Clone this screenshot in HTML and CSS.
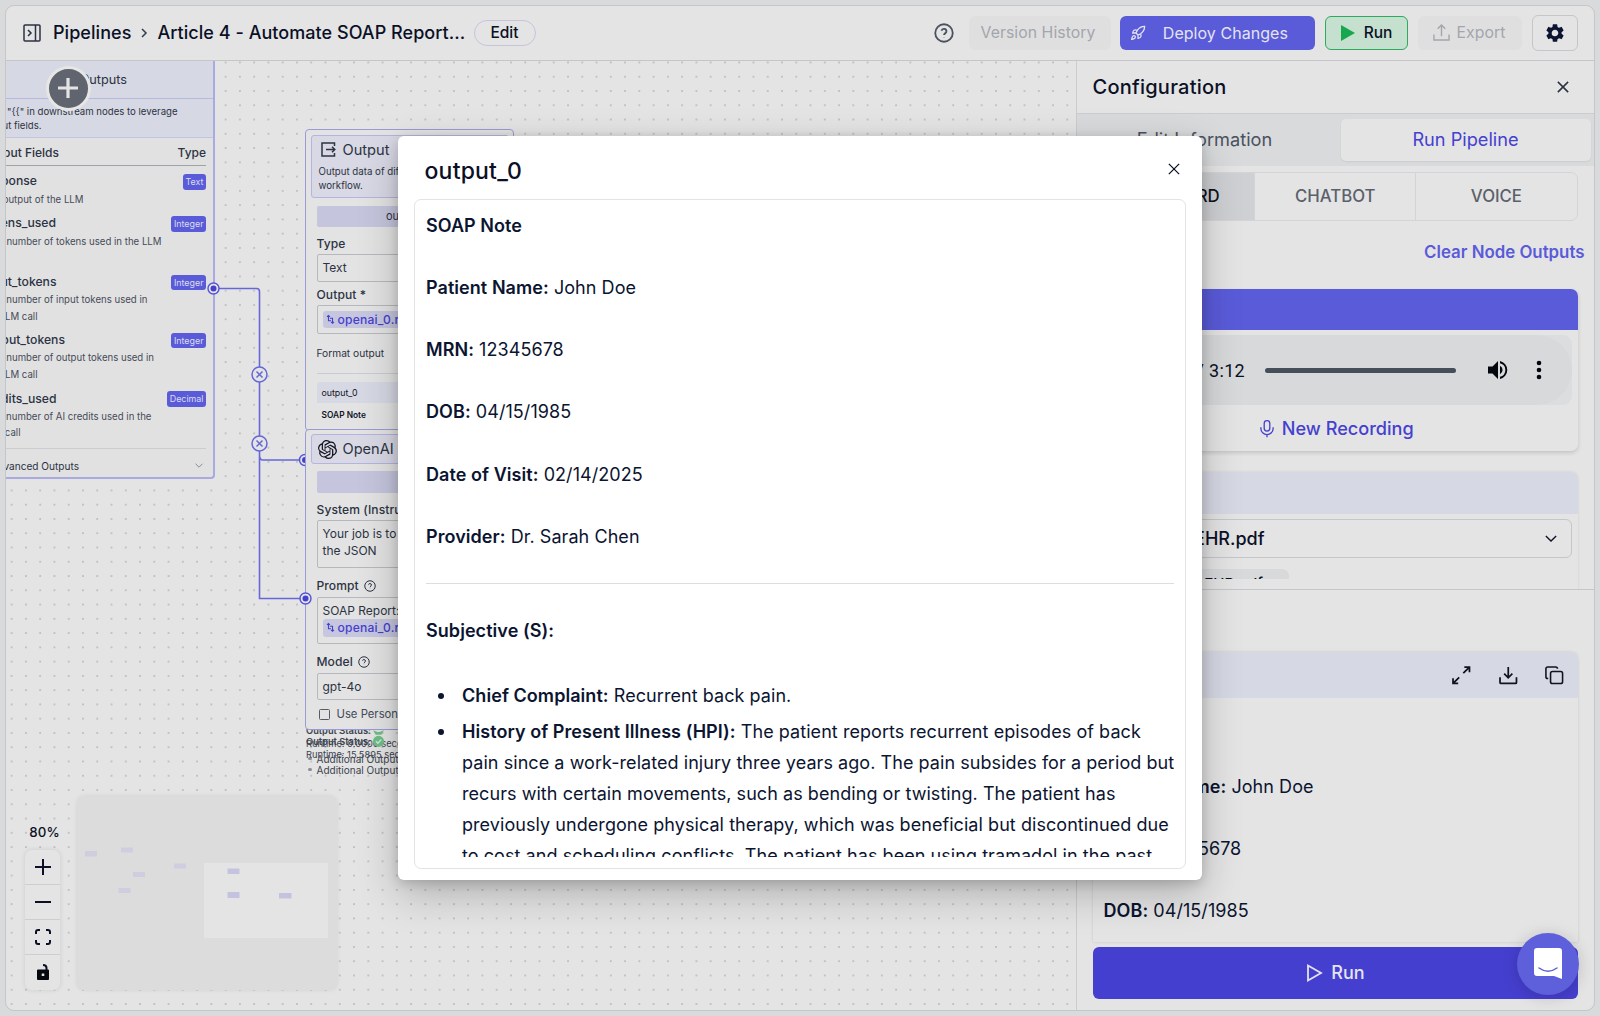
FILE: index.html
```html
<!DOCTYPE html>
<html lang="en">
<head>
<meta charset="utf-8">
<title>Pipelines</title>
<link rel="stylesheet" href="styles.css">
</head>
<body>
<svg class="defs" width="0" height="0">
  <symbol id="help" viewBox="0 0 24 24"><circle cx="12" cy="12" r="10.5"/><path d="M9 9.3a3 3 0 0 1 5.9.8c0 2-2.9 2.4-2.9 4.4M12 17.6v.3"/></symbol>
  <symbol id="close" viewBox="0 0 14 14"><path d="M1 1l12 12M13 1L1 13"/></symbol>
  <symbol id="chev" viewBox="0 0 14 8"><path d="M1 1l6 6 6-6"/></symbol>
  <symbol id="var" viewBox="0 0 12 12"><path d="M2.500 -1v9H7M0 1.500l2.500-2.500L5 1.500M5 4h4.500v8M7 10l2.500 2.500L12 10"/></symbol>
</svg>
<div class="app">
  <header class="topbar">
    <svg class="i-panel" viewBox="0 0 18 18"><rect x="1" y="1" width="16" height="16" rx="1"/><path d="M12.500 1v16M5 6l3 3-3 3"/></svg>
    <span class="crumb">Pipelines</span>
    <svg class="i-sep" viewBox="0 0 6 10"><path d="M1 1l4 4-4 4"/></svg>
    <span class="crumb title">Article 4 - Automate SOAP Report...</span>
    <span class="edit">Edit</span>
    <span class="spacer"></span>
    <svg class="i-help"><use href="#help"/></svg>
    <span class="btn ghost version">Version History</span>
    <span class="btn deploy"><svg viewBox="0 0 24 24"><path d="M4.500 16.500c-1.500 1.260-2 5-2 5s3.740-.5 5-2c.71-.84.7-2.130-.09-2.910a2.180 2.180 0 0 0-2.910-.09zM12 15l-3-3a22 22 0 0 1 2-3.950A12.880 12.880 0 0 1 22 2c0 2.720-.78 7.500-6 11a22.350 22.350 0 0 1-4 2zM9 12H4s.55-3.030 2-4c1.620-1.080 5 0 5 0M12 15v5s3.030-.55 4-2c1.080-1.620 0-5 0-5"/></svg>Deploy Changes</span>
    <span class="btn run"><svg viewBox="0 0 14 16"><path d="M0 0l14 8-14 8z"/></svg>Run</span>
    <span class="btn ghost export"><svg viewBox="0 0 18 18"><path d="M1 11v6h16v-6M9 13V1M5 5l4-4 4 4"/></svg>Export</span>
    <span class="btn gear"><svg viewBox="0 0 24 24"><path d="M19.140 12.940c.04-.3.06-.61.06-.94 0-.32-.02-.64-.07-.94l2.030-1.580a.49.49 0 0 0 .12-.61l-1.920-3.320a.488.488 0 0 0-.59-.22l-2.390.96c-.5-.38-1.030-.7-1.620-.94l-.36-2.540a.484.484 0 0 0-.48-.41h-3.840c-.24 0-.43.17-.47.41l-.36 2.540c-.59.24-1.130.57-1.620.94l-2.390-.96c-.22-.08-.47 0-.59.22L2.740 8.870c-.12.21-.08.47.12.61l2.030 1.580c-.05.3-.09.63-.09.94s.02.64.07.94l-2.030 1.580a.49.49 0 0 0-.12.61l1.920 3.320c.12.22.37.29.59.22l2.390-.96c.5.38 1.030.7 1.620.94l.36 2.540c.05.24.24.41.48.41h3.840c.24 0 .44-.17.47-.41l.36-2.540c.59-.24 1.130-.56 1.620-.94l2.390.96c.22.08.47 0 .59-.22l1.920-3.320c.12-.22.07-.47-.12-.61l-2.010-1.580zM12 15.600A3.610 3.610 0 0 1 8.400 12c0-1.980 1.620-3.600 3.600-3.600s3.600 1.620 3.600 3.600-1.620 3.600-3.600 3.600z"/></svg></span>
  </header>
  <div class="body">
    <main class="canvas">
      <div class="status first">
        <p class="st">Output Status:</p><p class="rt">Runtime: 0.0000 seconds</p><p class="ao">Additional Outputs</p>
      </div>
      <div class="status second">
        <p class="st">Output Status:</p><p class="rt">Runtime: 15.5895 seconds</p><p class="ao">Additional Outputs</p>
      </div>
      <svg class="wires" width="320" height="600" viewBox="0 60 320 600">
        <g class="line"><path d="M213.500 288.500H256.500Q259.500 288.500 259.500 291.500V598.500H305M259.500 455Q259.500 460 263 460H305"/></g>
        <g class="mid"><circle cx="259.500" cy="374.500" r="7.500"/><circle cx="259.500" cy="443.500" r="7.500"/><path d="M256.500 371.500l6 6m0-6l-6 6M256.500 440.500l6 6m0-6l-6 6"/></g>
        <g class="port"><circle cx="305" cy="460" r="5.500"/><circle class="dot" cx="305" cy="460" r="3"/></g>
      </svg>
      <section class="node outputs">
        <div class="n-head"><span class="t" style="width:127.500px">Outputs</span></div>
        <div class="n-desc"><span class="t" style="width:178px">Type "{{" in downstream nodes to leverage</span><span class="t" style="width:42px">output fields.</span></div>
        <div class="n-cols"><span class="t" style="width:59.500px">Output Fields</span><span>Type</span></div>
        <div class="field one"><div class="row"><b class="t" style="width:37.500px">response</b><i>Text</i></div><span class="t" style="width:84px">The output of the LLM</span></div>
        <div class="field two"><div class="row"><b class="t" style="width:56.500px">tokens_used</b><i>Integer</i></div><span class="t" style="width:162px">The number of tokens used in the LLM</span><span>&nbsp;</span></div>
        <div class="field"><div class="row"><b class="t" style="width:57px">input_tokens</b><i>Integer</i></div><span class="t" style="width:148px">The number of input tokens used in</span><span class="t" style="width:38px">the LLM call</span></div>
        <div class="field"><div class="row"><b class="t" style="width:65.500px">output_tokens</b><i>Integer</i></div><span class="t" style="width:154.500px">The number of output tokens used in</span><span class="t" style="width:38px">the LLM call</span></div>
        <div class="field last"><div class="row"><b class="t" style="width:57px">credits_used</b><i>Decimal</i></div><span class="t" style="width:152px">The number of AI credits used in the</span><span class="t" style="width:21px">LLM call</span></div>
        <div class="n-adv"><span class="t" style="width:79.500px">Advanced Outputs</span><svg><use href="#chev"/></svg></div>
      </section>
      <section class="node out">
        <div class="box-head tall">
          <div class="name"><svg viewBox="0 0 15 15"><path d="M13.500 4V1H1v13h12.500v-3M5 7.500h9M11 4.800l2.800 2.700L11 10.200"/></svg>Output</div>
          <p>Output data of different types from<br>workflow.</p>
        </div>
        <div class="tag">output_0</div>
        <div class="lbl l1">Type</div>
        <div class="inp">Text</div>
        <div class="lbl l2">Output *</div>
        <div class="inp"><span class="pill"><svg><use href="#var"/></svg>openai_0.response</span></div>
        <div class="fmt">Format output</div>
        <div class="prev"><div>output_0</div><b>SOAP Note</b></div>
      </section>
      <section class="node ai">
        <div class="box-head">
          <div class="name"><svg class="knot" viewBox="0 0 24 24"><path d="M22.282 9.821a5.985 5.985 0 0 0-.516-4.910 6.046 6.046 0 0 0-6.510-2.900A6.065 6.065 0 0 0 4.981 4.180a5.985 5.985 0 0 0-3.998 2.900 6.046 6.046 0 0 0 .743 7.097 5.980 5.980 0 0 0 .510 4.911 6.051 6.051 0 0 0 6.515 2.900A5.985 5.985 0 0 0 13.260 24a6.056 6.056 0 0 0 5.772-4.206 5.990 5.990 0 0 0 3.998-2.900 6.056 6.056 0 0 0-.747-7.073zM13.260 22.430a4.476 4.476 0 0 1-2.876-1.040l.141-.081 4.779-2.758a.795.795 0 0 0 .393-.681v-6.737l2.020 1.169a.071.071 0 0 1 .038.052v5.583a4.504 4.504 0 0 1-4.495 4.493zM3.600 18.304a4.471 4.471 0 0 1-.535-3.014l.142.085 4.783 2.759a.771.771 0 0 0 .781 0l5.843-3.369v2.332a.080.080 0 0 1-.033.062L9.740 19.950a4.500 4.500 0 0 1-6.140-1.646zM2.341 7.896a4.485 4.485 0 0 1 2.366-1.973V11.600a.766.766 0 0 0 .388.677l5.815 3.354-2.020 1.169a.076.076 0 0 1-.071 0l-4.830-2.787A4.504 4.504 0 0 1 2.341 7.872zm16.597 3.855l-5.834-3.387L15.119 7.200a.076.076 0 0 1 .071 0l4.830 2.791a4.494 4.494 0 0 1-.676 8.105v-5.678a.790.790 0 0 0-.406-.667zm2.010-3.023l-.141-.085-4.774-2.782a.776.776 0 0 0-.785 0L9.409 9.230V6.897a.066.066 0 0 1 .028-.061l4.830-2.787a4.499 4.499 0 0 1 6.681 4.660zM8.307 12.863l-2.020-1.164a.080.080 0 0 1-.038-.057V6.074a4.499 4.499 0 0 1 7.376-3.453l-.142.080L8.704 5.459a.795.795 0 0 0-.393.681zm1.097-2.365l2.602-1.500 2.607 1.500v2.999l-2.597 1.500-2.607-1.500z"/></svg>OpenAI</div>
        </div>
        <div class="tag"></div>
        <div class="lbl a1">System (Instructions)</div>
        <div class="inp area">Your job is to<br>the JSON</div>
        <div class="lbl a2">Prompt <svg><use href="#help"/></svg></div>
        <div class="inp area">SOAP Report:<br><span class="pill"><svg><use href="#var"/></svg>openai_0.response</span></div>
        <div class="lbl a3">Model <svg><use href="#help"/></svg></div>
        <div class="inp">gpt-4o</div>
        <div class="chk"><i></i>Use Personal Api Key</div>
      </section>
      <svg class="ports" width="320" height="600" viewBox="0 60 320 600"><g class="port"><circle cx="213.500" cy="288.500" r="5.500"/><circle class="dot" cx="213.500" cy="288.500" r="3"/><circle cx="305.500" cy="598.500" r="5.500"/><circle class="dot" cx="305.500" cy="598.500" r="3"/></g></svg>
      <svg class="checks" viewBox="0 0 14 20"><path class="leaf" d="M1 0l5 2h2l5-2-3 5H4z"/><circle cx="7" cy="12" r="6"/><path d="M4.300 12l2 2 3.700-4"/></svg>
      <button class="add"><svg viewBox="0 0 20 20"><path d="M10 0v20M0 10h20"/></svg></button>
      <div class="zoom">
        <span>80%</span>
        <div class="ctl">
          <div><svg viewBox="0 0 16 16"><path d="M8 0v16M0 8h16"/></svg></div>
          <div><svg viewBox="0 0 16 16"><path d="M0 8h16"/></svg></div>
          <div><svg viewBox="0 0 16 16"><path d="M1 5V3q0-2 2-2h2M11 1h2q2 0 2 2v2M15 11v2q0 2-2 2h-2M5 15H3q-2 0-2-2v-2"/></svg></div>
          <div><svg viewBox="0 0 16 16"><path class="lockb" fill-rule="evenodd" d="M3 5.500h10q1 0 1 1V15q0 1-1 1H3q-1 0-1-1V6.500q0-1 1-1zM6.700 9.500v2.500h2.600V9.500z"/><path class="lock" d="M11.500 6V4Q11.500 1 8 1"/></svg></div>
        </div>
      </div>
      <div class="map">
        <svg viewBox="77 796 261 194"><rect class="view" x="204" y="863" width="124" height="75"/><g class="dim"><rect x="85" y="851" width="12" height="5.500"/><rect x="121" y="847.500" width="12" height="5"/><rect x="133" y="872" width="12" height="5"/><rect x="174" y="863.500" width="12" height="5"/><rect x="118.500" y="888" width="12" height="5"/></g><g class="lit"><rect x="227.500" y="868.500" width="12" height="5.500"/><rect x="227.500" y="892" width="12" height="6"/><rect x="279" y="893" width="12.500" height="5.500"/></g></svg>
      </div>
    </main>
    <aside class="panel">
      <div class="p-head"><h2>Configuration</h2><svg><use href="#close"/></svg></div>
      <div class="tabs"><span>Edit Information</span><span class="on">Run Pipeline</span></div>
      <div class="upper">
        <div class="modes"><span class="on">STANDARD</span><span>CHATBOT</span><span>VOICE</span></div>
        <div class="clear">Clear Node Outputs</div>
        <div class="card audio">
          <div class="c-head"></div>
          <div class="player"><div class="bar"><span>0:00 / 3:12</span><i></i>
            <svg class="vol" viewBox="0 0 20 20"><path d="M0 6.500v7h4.500L10 19V1L4.500 6.500z"/><path d="M12 5.800v8.400a4.700 4.700 0 0 0 0-8.400z"/><path d="M12 1v2.200a7 7 0 0 1 0 13.600V19a9.200 9.200 0 0 0 0-18z"/></svg>
            <svg class="more" viewBox="0 0 6 20"><circle cx="3" cy="3" r="2.300"/><circle cx="3" cy="10" r="2.300"/><circle cx="3" cy="17" r="2.300"/></svg></div></div>
          <div class="rec"><svg viewBox="0 0 16 20"><rect x="4.800" y="1" width="6.400" height="12" rx="3.200"/><path d="M1 8.500v1.500a7 7 0 0 0 14 0V8.500M8 17v3"/></svg>New Recording</div>
        </div>
        <div class="card file">
          <div class="c-head"></div>
          <div class="select"><span>John_Doe_EHR.pdf</span><svg><use href="#chev"/></svg></div>
          <div class="chip">John_Doe_EHR.pdf</div>
        </div>
      </div>
      <div class="lower">
        <div class="card result">
          <div class="c-head">
            <svg viewBox="0 0 18 18"><path d="M11 7l6-6M12 1h5v5M7 11l-6 6M1 12v5h5"/></svg>
            <svg viewBox="0 0 18 18"><path d="M1 11v5q0 1 1 1h14q1 0 1-1v-5M9 1v10M5 7.500l4 4 4-4"/></svg>
            <svg viewBox="0 0 20 20"><rect x="6" y="6" width="13" height="13" rx="2"/><path d="M3.500 13.500H3q-2 0-2-2V3q0-2 2-2h8.500q2 0 2 2"/></svg>
          </div>
          <div class="note"><p><b>SOAP Note</b></p><p><b>Patient Name:</b> John Doe</p><p><b>MRN:</b> 12345678</p><p><b>DOB:</b> 04/15/1985</p></div>
        </div>
        <div class="go"><svg viewBox="0 0 15 18"><path d="M1 1.500v15L14 9z"/></svg>Run</div>
      </div>
    </aside>
  </div>
</div>
<div class="modal">
  <div class="m-head"><h1>output_0</h1><svg><use href="#close"/></svg></div>
  <div class="m-box"><div class="note">
    <p><b>SOAP Note</b></p><p><b>Patient Name:</b> John Doe</p><p><b>MRN:</b> 12345678</p><p><b>DOB:</b> 04/15/1985</p><p><b>Date of Visit:</b> 02/14/2025</p><p><b>Provider:</b> Dr. Sarah Chen</p>
    <hr>
    <p><b>Subjective (S):</b></p>
    <ul><li><b>Chief Complaint:</b> Recurrent back pain.</li>
    <li><b>History of Present Illness (HPI):</b> The patient reports recurrent episodes of back<br>pain since a work-related injury three years ago. The pain subsides for a period but<br>recurs with certain movements, such as bending or twisting. The patient has<br>previously undergone physical therapy, which was beneficial but discontinued due<br>to cost and scheduling conflicts. The patient has been using tramadol in the past</li></ul>
  </div></div>
</div>
<div class="chat"><svg viewBox="0 0 28 32"><path class="bub" d="M3 0h22q3 0 3 3v28l-8-3H3q-3 0-3-3V3q0-3 3-3z"/><path class="smile" d="M5 20q9 6.500 18 0"/></svg></div>
</body>
</html>
```
FILE: styles.css
```css
* { box-sizing: border-box; }
body { margin: 0; width: 1600px; height: 1016px; overflow: hidden; background: #d9dadc; padding: 5px; font-family: Inter, "Liberation Sans", sans-serif; color: #0b1026; }
.defs { position: absolute; }
p, h1, h2 { margin: 0; }
svg { fill: none; stroke: currentColor; stroke-width: 1.500; display: block; flex: none; overflow: visible; }
symbol { overflow: visible; }
.app { width: 1590px; height: 1006px; border: 1.500px solid #c4c6c9; border-radius: 9px; background: #e4e4e4; overflow: hidden; display: flex; flex-direction: column; }
.topbar { height: 55px; flex: none; border-bottom: 1.500px solid #c4c6c9; display: flex; align-items: center; padding: 0 16px 1px 17px; white-space: nowrap; }
.i-panel { width: 18px; height: 18px; color: #2b3242; margin-right: 12px; }
.crumb { font-size: 18px; font-weight: 500; width: 79px; letter-spacing: 0.050px; }
.i-sep { width: 6px; height: 10px; margin: 0 10.500px 0 9px; color: #333a49; }
.title { width: 310px; letter-spacing: 0.040px; }
.edit { width: 62px; height: 26px; border: 1px solid #c3c4de; border-radius: 13px; font-size: 15.500px; font-weight: 500; display: flex; align-items: center; justify-content: center; margin-left: 6px; }
.spacer { flex: 1; }
.i-help { width: 20px; height: 20px; color: #4a5160; margin-right: 15px; stroke-width: 2.200; }
.btn { height: 34px; border-radius: 6px; display: flex; align-items: center; justify-content: center; font-size: 15.800px; font-weight: 500; }
.ghost { background: #dfdfe0; color: #a3a6ac; font-weight: 400; letter-spacing: 0.050px; }
.version { width: 142px; margin-right: 9px; padding-right: 4px; }
.deploy { width: 195px; background: #5a5bd9; color: #e4e4f0; gap: 17px; margin-right: 10px; justify-content: flex-end; padding-right: 27px; font-size: 16px; font-weight: 400; letter-spacing: 0.050px; }
.deploy svg { width: 16px; height: 16px; stroke-width: 1.900; }
.run { width: 83px; background: #c5e0ce; border: 1.500px solid #2bab5b; gap: 9px; margin-right: 10px; font-size: 15.500px; }
.run svg { width: 14px; height: 16px; fill: #17a74e; stroke: none; }
.export { width: 104px; gap: 7px; margin-right: 10px; padding-right: 2px; }
.export svg { width: 17px; height: 17px; }
.gear { width: 46px; height: 36px; border: 1.500px solid #c4c6c9; }
.gear svg { width: 22px; height: 22px; fill: #0b1430; stroke: none; }
.body { flex: 1; display: flex; min-height: 0; }

.canvas { flex: 1; position: relative; overflow: hidden; background-image: radial-gradient(circle at 1px 1px, #bfc1c5 0.700px, transparent 1.100px); background-size: 14.280px 14.280px; background-position: 4.700px 0.500px; }
.wires, .ports { position: absolute; left: -6.500px; top: -1.500px; }
.line { stroke: #6667d6; stroke-width: 1.600; }
.mid { fill: #e4e4e4; stroke: #6667d6; stroke-width: 1.500; }
.port { fill: #e4e4e4; stroke: #5454d4; stroke-width: 1.400; }
.dot { fill: #4540d0; stroke: none; }
.node { position: absolute; background: #e1e1e2; }
.outputs { left: 0; top: -4px; width: 208.500px; height: 422px; border-right: 2px solid #a9aae0; border-bottom: 2px solid #a9aae0; border-radius: 0 4px 4px 0; color: #2c3342; display: flex; flex-direction: column; }
.t { display: flex; justify-content: flex-end; white-space: pre; margin-left: -6.500px; flex: none; }
.n-head { height: 42px; background: #d6d8e4; border-bottom: 1px solid #b7b8e2; font-size: 12.700px; padding-top: 15px; }
.n-desc { height: 39px; background: #d6d8e4; border-bottom: 1px solid #c3c4e2; font-size: 9.600px; line-height: 14.300px; padding-top: 5.500px; }
.n-cols { height: 28px; display: flex; justify-content: space-between; align-items: center; font-size: 12px; font-weight: 500; border-bottom: 1.500px solid #9fa2a8; margin-right: 6.500px; padding-top: 2.500px; }
.field { height: 58.300px; flex: none; font-size: 9.650px; line-height: 16.600px; padding-top: 6px; color: #454b58; }
.field b { font-size: 12.200px; font-weight: 500; color: #2c3342; }
.field i { font-style: normal; background: #5a5bd9; color: #dcdcee; font-size: 8.900px; line-height: 15.500px; height: 15.500px; border-radius: 3px; padding: 0 2.500px; }
.row { display: flex; justify-content: space-between; align-items: center; height: 19.500px; margin: 0 6.500px 0 0; }
.field.one { height: 42px; }
.field.two { height: 58.500px; }
.field.last { height: 65px; }
.n-adv { margin-right: 7px; border-top: 1px solid #cbccd0; flex: 1; display: flex; align-items: center; justify-content: space-between; font-size: 10.100px; padding-top: 5px; }
.n-adv svg { width: 8px; height: 5px; margin-right: 3px; color: #777c85; }
.out, .ai { left: 298.500px; width: 209px; border: 1.500px solid #9a9bd4; border-radius: 4px; background: #e3e3e4; padding: 4.500px 4px 4px 5px; color: #2c3342; overflow: hidden; white-space: nowrap; }
.out { top: 68px; height: 302px; }
.ai { top: 367.500px; height: 301px; padding-top: 4.500px; }
.box-head { height: 30px; border: 1px solid #b3b4e2; border-radius: 3px; background: #d8d9e5; padding: 0 7px; }
.tall { height: 63px; }
.name { display: flex; align-items: center; gap: 7px; height: 28px; font-size: 14.600px; }
.name svg { width: 15px; height: 15px; margin-left: 2px; }
.name .knot { width: 19px; height: 19px; margin: 0 -1.500px 0 -0.500px; fill: #10141f; stroke: none; }
.box-head p { font-size: 9.700px; line-height: 14.300px; padding-top: 1px; }
.tag { height: 21.500px; margin: 8px 6px 0; background: #c5c5dd; font-size: 11px; text-align: center; line-height: 21px; border-radius: 2px; }
.out .tag { padding-right: 2px; }
.ai .tag { margin-top: 7px; }
.lbl { font-size: 12.050px; font-weight: 500; margin: 0 6px; display: flex; align-items: center; gap: 5px; height: 26.500px; padding-top: 6px; letter-spacing: 0.100px; }
.lbl svg { width: 12px; height: 12px; stroke-width: 2; }
.l2 { height: 23px; padding-top: 2px; }
.a1 { height: 27.500px; padding-top: 6px; }
.a2 { height: 29px; padding-top: 7px; }
.a3 { height: 28.500px; padding-top: 7px; }
.inp { border: 1px solid #b6b8bd; border-radius: 2px; margin: 0 6px; height: 28.500px; font-size: 12px; display: flex; align-items: center; padding: 0 5px; }
.area { height: 47.500px; display: block; line-height: 16.500px; padding-top: 5px; }
.ai .inp:not(.area) { height: 27.500px; }
.pill { display: inline-flex; align-items: center; gap: 4px; height: 17.500px; background: #c6c6de; color: #4540d0; border-radius: 3px; padding: 0 5px 0 4px; font-weight: 500; font-size: 12.100px; letter-spacing: 0.200px; }
.pill svg { width: 7px; height: 7px; stroke-width: 1.800; }
.fmt { font-size: 10.200px; margin: 0 6px; height: 40px; padding-top: 13px; border-bottom: 1px solid #cbccd0; }
.prev { margin: 8px 6px 0; font-size: 8.800px; color: #10141f; }
.prev div { background: #d6d8e4; height: 21px; line-height: 21.500px; padding-left: 5px; border-radius: 3px 3px 0 0; }
.prev b { display: block; font-weight: 600; padding: 7.500px 5px; font-size: 8.400px; }
.chk { display: flex; align-items: center; gap: 7px; height: 28px; font-size: 11.300px; margin-left: 8px; color: #454b58; }
.chk i { width: 11px; height: 11px; border: 1.200px solid #555b67; border-radius: 1.500px; }
.status { position: absolute; left: 300px; white-space: nowrap; font-size: 9.300px; line-height: 12px; color: #3d434f; }
.first { top: 663.500px; }
.second { top: 674.500px; }
.st { font-weight: 600; }
.rt { margin-top: 1px; font-size: 9.300px; }
.ao { margin-top: 3px; padding-left: 10.500px; font-size: 10px; position: relative; }
.ao::before { content: ""; position: absolute; left: 2px; top: 4px; width: 3.500px; height: 3.500px; border-radius: 50%; background: #8a8e96; }
.checks { position: absolute; left: 366px; top: 669px; width: 13px; height: 19px; color: #d5e4da; }
.checks circle, .leaf { fill: #6fbd86; stroke: none; }
.add { position: absolute; left: 39.500px; top: 4.500px; width: 45px; height: 45px; border-radius: 50%; border: 3px solid #e6e6e6; background: #60646e; color: #e4e4e4; display: flex; align-items: center; justify-content: center; padding: 0; }
.add svg { width: 20px; height: 20px; stroke-width: 3.200; }
.zoom { position: absolute; left: 19px; top: 762.500px; width: 36px; font-size: 13.300px; font-weight: 500; letter-spacing: 0.200px; }
.zoom span { display: block; text-align: right; height: 26px; width: 35px; }
.ctl { width: 35px; height: 140px; border-radius: 7px; background: #e4e4e4; box-shadow: 0 0 5px #0000001c; }
.ctl div { height: 35px; border-bottom: 1px solid #cdced2; display: flex; align-items: center; justify-content: center; }
.ctl div:last-child { border: 0; }
.ctl svg { width: 16px; height: 16px; stroke-width: 2; }
.ctl .lockb { fill: #05070f; stroke: none; }
.map { position: absolute; left: 70.500px; top: 734.500px; width: 260px; height: 194px; background: #dcdcdc; border-radius: 7px; box-shadow: 0 0 4px #00000014; }
.map svg { width: 261px; height: 194px; stroke: none; }
.view { fill: #e4e4e4; }
.dim { fill: #cecee0; }
.lit { fill: #c3c3e0; }

.panel { width: 518.500px; flex: none; border-left: 1.500px solid #cbccd0; display: flex; flex-direction: column; white-space: nowrap; }
.p-head { height: 52.500px; border-bottom: 1.500px solid #cbccd0; display: flex; align-items: center; justify-content: space-between; padding: 0 25.500px 0 16px; }
h2 { font-size: 20px; font-weight: 500; letter-spacing: 0.250px; }
.p-head svg { width: 12px; height: 12px; stroke-width: 1.800; color: #2b3242; }
.tabs { height: 52px; background: #d8dadc; display: flex; padding: 5px 3.500px 5px 14px; font-size: 18.200px; color: #4a5160; }
.tabs span { flex: 1 1 0; display: flex; align-items: center; justify-content: center; border-radius: 5px; padding: 0 22px 1px 0; }
.tabs .on { background: #e4e4e4; color: #4540d0; box-shadow: 0 1px 2px #0001; padding: 0 0 1px; flex: 0 0 250px; }
.upper { height: 424px; border-bottom: 1.500px solid #c4c6c9; padding: 6px 16.500px 0 15.500px; overflow: hidden; flex: none; }
.modes { display: grid; grid-template-columns: repeat(3, 1fr); height: 49.500px; border: 1px solid #d3d4d7; border-radius: 7px; overflow: hidden; font-size: 16.800px; font-weight: 500; color: #5b606b; }
.modes span { display: flex; align-items: center; justify-content: center; border-left: 1px solid #d3d4d7; }
.modes .on { background: #cfd0d3; color: #10141f; }
.clear { text-align: right; font-size: 16.850px; font-weight: 600; color: #5a5bd9; height: 67.500px; padding-top: 20.500px; margin-right: -7px; }
.card { border-radius: 7px; overflow: hidden; box-shadow: 0 2px 4px #00000024; }
.audio { height: 162.500px; margin-bottom: 21px; }
.audio .c-head { height: 41px; background: #5a5bd9; }
.player { margin: 5.500px 5.500px 0 5.500px; background: #dcdddf; border-radius: 9px; }
.bar { height: 70px; border-radius: 35px; background: #d7d9db; display: flex; align-items: center; justify-content: flex-end; padding-right: 30px; font-family: Roboto, sans-serif; font-size: 18px; letter-spacing: 0.300px; }
.bar i { width: 191px; height: 5px; border-radius: 3px; background: #464e5a; margin: 0 32px 0 20px; }
.vol, .more { height: 20px; fill: #05070f; stroke: none; }
.vol { width: 20px; margin-right: 28px; }
.more { width: 6px; }
.rec { display: flex; justify-content: center; align-items: center; gap: 8px; height: 46px; color: #4540d0; font-size: 18.100px; font-weight: 500; padding-left: 4px; }
.rec svg { width: 14px; height: 19px; }
.file { height: 130px; box-shadow: 0 0 3px #00000018; }
.file .c-head { height: 41.500px; background: #d6d8e4; }
.file .select { height: 39px; margin: 5px 5.500px 0; border: 1.500px solid #c4c6c9; border-radius: 6px; display: flex; align-items: center; justify-content: space-between; font-size: 18px; font-weight: 500; padding: 0 14px 0 8px; }
.select span { width: 158px; display: flex; justify-content: flex-end; }
.select svg { width: 12px; height: 7px; }
.chip { width: 190px; height: 10px; overflow: hidden; background: #d7d9db; border-radius: 7px 7px 0 0; margin: 11px 0 0 7px; font-size: 15px; font-weight: 500; text-align: right; padding: 6px 26px 0 0; line-height: 18px; }
.lower { flex: 1; padding: 62px 16.500px 0 16px; display: flex; flex-direction: column; min-height: 0; }
.result { height: 290px; border-radius: 7px 7px 0 0; box-shadow: 0 0 3px #00000022; flex: none; }
.result .c-head { height: 46.500px; background: #d6d8e4; display: flex; align-items: center; justify-content: flex-end; gap: 28px; padding-right: 14px; color: #10141f; }
.c-head svg { width: 18.500px; height: 18.500px; stroke-width: 1.700; }
.note { font-size: 18px; line-height: 31.070px; color: #0b1430; letter-spacing: 0.060px; white-space: nowrap; }
.note p { margin-bottom: 31.070px; }
.note b { font-weight: 600; }
.result .note { padding: 11px 11px 0; }
.go { height: 51.500px; margin-top: 5.500px; background: #453fcf; border-radius: 6px; display: flex; align-items: center; justify-content: center; gap: 9px; color: #e4e4f0; font-size: 18px; font-weight: 500; flex: none; padding-left: 2px; }
.go svg { width: 15px; height: 18px; stroke-width: 1.800; }

.modal { position: absolute; left: 398px; top: 136px; width: 803.500px; height: 743.500px; background: #fff; border-radius: 6px; box-shadow: 0 14px 40px #0000003a, 0 3px 12px #0000002a; padding: 0 16px; }
.m-head { height: 63px; display: flex; align-items: center; justify-content: space-between; padding: 6px 5.500px 0 10.500px; }
h1 { font-size: 23px; font-weight: 500; letter-spacing: 0.200px; }
.m-head svg { width: 12px; height: 12px; margin-bottom: 4px; }
.m-box { height: 669.500px; border: 1.500px solid #e2e3e5; border-radius: 7px; padding: 10px 10.500px 10px 11px; }
.m-box .note { height: 647px; overflow: hidden; }
hr { border: 0; border-top: 1.500px solid #dcdde0; margin: 0 0 31.500px; }
ul { margin: 0; padding: 2.500px 0 0 36px; list-style: none; }
li { margin-bottom: 5px; position: relative; }
li::before { content: ""; position: absolute; left: -24px; top: 13.500px; width: 6px; height: 6px; border-radius: 50%; background: #0b1430; }
.chat { position: absolute; left: 1517px; top: 933px; width: 62px; height: 62px; border-radius: 50%; background: #5e5fda; box-shadow: 0 2px 16px #0000002c; display: flex; align-items: center; justify-content: center; }
.chat svg { width: 28px; height: 32px; }
.bub { fill: #fff; stroke: none; }
.smile { stroke: #5e5fda; stroke-width: 1.500; stroke-linecap: round; }
```
